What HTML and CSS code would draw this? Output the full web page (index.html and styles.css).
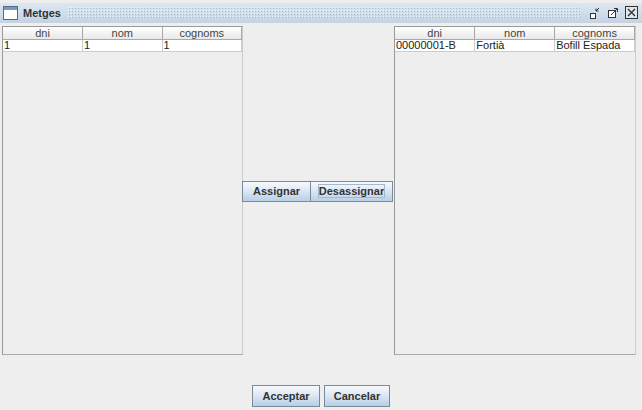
FILE: index.html
```html
<!DOCTYPE html>
<html lang="ca">
<head>
    <meta charset="UTF-8">
    <title>Metges</title>
    <link rel="stylesheet" href="styles.css">
</head>
<body>
    <div class="frame">
        <div class="title-bar">
            <svg class="frame-icon" width="15" height="14" viewBox="0 0 15 14">
                <rect x="0.5" y="0.5" width="14" height="13" fill="#fff" stroke="#4f6b88"/>
                <rect x="1" y="1" width="13" height="3" fill="#7f9ab5"/>
            </svg>
            <span class="title">Metges</span>
            <div class="bumps"></div>
            <div class="controls">
                <!-- iconify -->
                <svg width="12" height="12" viewBox="0 0 12 12">
                    <rect x="1.5" y="6.5" width="5" height="5" fill="#fff" stroke="#333"/>
                    <path d="M10 1 L7 4 M7 1.5 V4 H9.5" stroke="#333" fill="none"/>
                </svg>
                <!-- maximize -->
                <svg width="12" height="12" viewBox="0 0 12 12">
                    <rect x="1.5" y="3.5" width="7" height="7" fill="#fff" stroke="#333"/>
                    <path d="M4 8 L10 2 M7 1.5 H10.5 V5" stroke="#333" fill="none"/>
                </svg>
                <!-- close -->
                <svg width="13" height="13" viewBox="0 0 13 13">
                    <rect x="0.5" y="0.5" width="12" height="12" fill="#dfe7ef" stroke="#333"/>
                    <path d="M3 3 L10 10 M10 3 L3 10" stroke="#333" stroke-width="1.4"/>
                </svg>
            </div>
        </div>

        <div class="content">
            <div class="main-row">
                <div class="table-pane">
                    <table>
                        <thead>
                            <tr><th>dni</th><th>nom</th><th>cognoms</th></tr>
                        </thead>
                        <tbody>
                            <tr><td>1</td><td>1</td><td>1</td></tr>
                        </tbody>
                    </table>
                </div>

                <div class="assign-col">
                    <div class="assign-buttons">
                        <button class="btn btn-assign">Assignar</button>
                        <button class="btn btn-unassign focused"><span>Desassignar</span></button>
                    </div>
                </div>

                <div class="table-pane">
                    <table>
                        <thead>
                            <tr><th>dni</th><th>nom</th><th>cognoms</th></tr>
                        </thead>
                        <tbody>
                            <tr><td>00000001-B</td><td>Fortià</td><td>Bofill Espada</td></tr>
                        </tbody>
                    </table>
                </div>
            </div>

            <div class="bottom-row">
                <button class="btn btn-dialog">Acceptar</button>
                <button class="btn btn-dialog">Cancelar</button>
            </div>
        </div>
    </div>
</body>
</html>
```

FILE: styles.css
```css
html, body {
    margin: 0;
    padding: 0;
    background-color: #eeeeee;
}
.frame {
    width: 642px;
    height: 410px;
    box-sizing: border-box;
    padding-top: 3px;
    display: flex;
    flex-direction: column;
    font-family: "Liberation Sans", Arial, sans-serif;
    background-color: #eeeeee;
    overflow: hidden;
}

/* Title bar */
.title-bar {
    height: 19px;
    display: flex;
    align-items: center;
    padding: 0 4px 0 3px;
    background: linear-gradient(#dde7f1, #c3d4e5);
    border-bottom: 1px solid #c7d4e0;
}
.frame-icon {
    flex: none;
    margin-right: 5px;
}
.title {
    font-size: 11px;
    font-weight: bold;
    color: #333;
    margin-right: 6px;
}
.bumps {
    flex: 1;
    height: 13px;
    background-image: radial-gradient(circle, #f4f8fc 0.6px, transparent 0.9px),
                      radial-gradient(circle, #a9bbce 0.6px, transparent 0.9px);
    background-size: 3px 3px, 3px 3px;
    background-position: 0 0, 1px 1px;
}
.controls {
    display: flex;
    align-items: center;
    gap: 6px;
    margin-left: 8px;
}
.controls svg {
    display: block;
}

/* Body */
.content {
    flex: 1;
    display: flex;
    flex-direction: column;
    padding: 3px 6px 0 2px;
}
.main-row {
    display: flex;
    height: 329px;
}
.table-pane {
    width: 241px;
    box-sizing: border-box;
    border: 1px solid #999;
    border-right-color: #ccc;
    border-bottom-color: #aaa;
    background-color: #eeeeee;
}
.table-pane:last-child {
    width: 242px;
}
table {
    width: 100%;
    border-collapse: collapse;
    table-layout: fixed;
    font-size: 11px;
}
th {
    height: 12px;
    padding: 0;
    font-weight: normal;
    color: #444;
    text-align: center;
    line-height: 11px;
    background: linear-gradient(#ffffff, #e8e8e8);
    border: 1px solid #aaa;
    border-top: none;
}
th:first-child, td:first-child {
    border-left: none;
}
td {
    height: 11px;
    padding: 0 1px;
    line-height: 11px;
    background-color: #fff;
    color: #222;
    border: 1px solid #ccc;
    white-space: nowrap;
    overflow: hidden;
}

/* Middle column with assign buttons */
.assign-col {
    width: 151px;
    display: flex;
    align-items: center;
    justify-content: center;
}
.assign-buttons {
    display: flex;
    margin-top: 1px;
}
.btn {
    font-family: "Liberation Sans", Arial, sans-serif;
    font-size: 11px;
    font-weight: bold;
    color: #333;
    border: 1px solid #7a8a99;
    border-radius: 0;
    background: linear-gradient(#f7fafd, #dde8f3 45%, #b8cfe5);
    padding: 0;
    cursor: pointer;
}
.btn-assign {
    width: 69px;
    height: 21px;
    margin-left: -2px;
}
.btn-unassign {
    width: 83px;
    height: 21px;
    margin-left: -1px;
}
.focused span {
    outline: 1px solid #a3b8cc;
    outline-offset: 0;
}
.bottom-row {
    flex: 1;
    display: flex;
    justify-content: center;
    align-items: flex-end;
    gap: 4px;
    padding-bottom: 3px;
    padding-left: 4px;
}
.btn-dialog {
    width: 68px;
    height: 22px;
}
.btn-dialog + .btn-dialog {
    width: 66px;
}
```
